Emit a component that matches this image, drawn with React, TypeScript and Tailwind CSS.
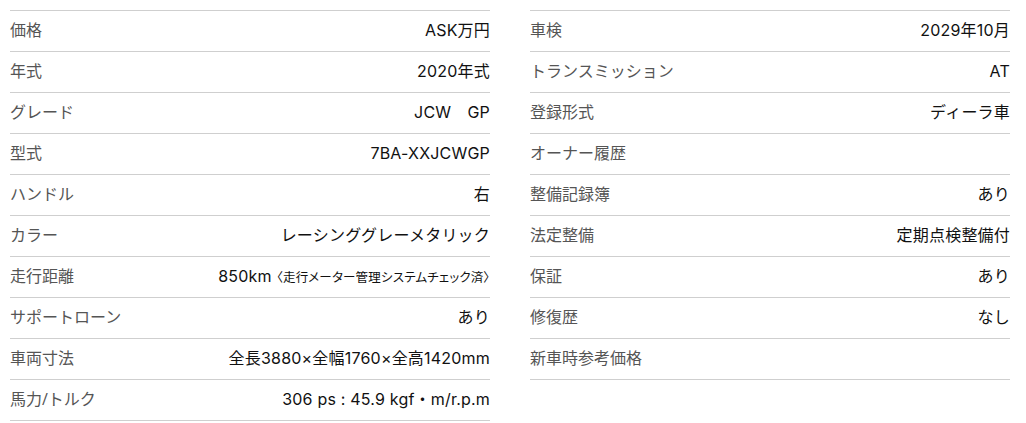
import React from "react";

type Row = { label: string; value?: React.ReactNode };

const left: Row[] = [
  { label: "価格", value: "ASK万円" },
  { label: "年式", value: "2020年式" },
  { label: "グレード", value: "JCW　GP" },
  { label: "型式", value: "7BA-XXJCWGP" },
  { label: "ハンドル", value: "右" },
  { label: "カラー", value: "レーシンググレーメタリック" },
  {
    label: "走行距離",
    value: (
      <>
        850km{" "}
        <span className="text-[12.5px] [font-feature-settings:'palt']">
          〈走行メーター管理システムチェック済〉
        </span>
      </>
    ),
  },
  { label: "サポートローン", value: "あり" },
  { label: "車両寸法", value: "全長3880×全幅1760×全高1420mm" },
  { label: "馬力/トルク", value: "306 ps : 45.9 kgf・m/r.p.m" },
];

const right: Row[] = [
  { label: "車検", value: "2029年10月" },
  { label: "トランスミッション", value: "AT" },
  { label: "登録形式", value: "ディーラ車" },
  { label: "オーナー履歴" },
  { label: "整備記録簿", value: "あり" },
  { label: "法定整備", value: "定期点検整備付" },
  { label: "保証", value: "あり" },
  { label: "修復歴", value: "なし" },
  { label: "新車時参考価格" },
];

function SpecTable({ rows }: { rows: Row[] }) {
  return (
    <div className="border-t border-[#cfcfcf]">
      {rows.map((r) => (
        <div
          key={r.label}
          className="flex h-[41px] items-center justify-between border-b border-[#cfcfcf] pb-[2px]"
        >
          <span className="font-['Open_Sans','Noto_Sans_CJK_JP',sans-serif] text-[16px] text-[#555]">
            {r.label}
          </span>
          <span className="whitespace-nowrap font-['Inter','Noto_Sans_CJK_JP',sans-serif] text-[16px] tracking-[0.2px] text-[#111]">
            {r.value}
          </span>
        </div>
      ))}
    </div>
  );
}

export default function App() {
  return (
    <div className="grid w-[1026px] grid-cols-[480px_480px] gap-x-10 bg-white pl-[10px] pt-[10px]">
      <SpecTable rows={left} />
      <SpecTable rows={right} />
    </div>
  );
}
